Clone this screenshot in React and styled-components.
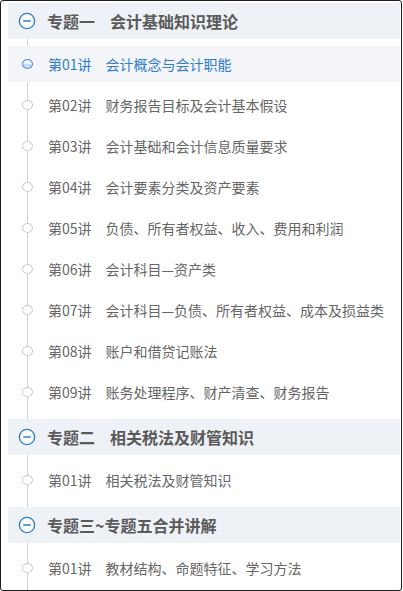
import React from 'react'
import styled, { createGlobalStyle } from 'styled-components'

const GlobalStyle = createGlobalStyle`
    html, body {
        margin: 0;
        padding: 0;
        background: #fff;
    }
    body {
        font-family: "Microsoft YaHei", "Noto Sans CJK SC", "Liberation Sans", sans-serif;
    }
`

const chapters = [
    {
        no: '专题一',
        title: '会计基础知识理论',
        lessons: [
            '会计概念与会计职能',
            '财务报告目标及会计基本假设',
            '会计基础和会计信息质量要求',
            '会计要素分类及资产要素',
            '负债、所有者权益、收入、费用和利润',
            '会计科目—资产类',
            '会计科目—负债、所有者权益、成本及损益类',
            '账户和借贷记账法',
            '账务处理程序、财产清查、财务报告',
        ],
    },
    {
        no: '专题二',
        title: '相关税法及财管知识',
        lessons: ['相关税法及财管知识'],
    },
    {
        no: '专题三~专题五合并讲解',
        title: '',
        lessons: ['教材结构、命题特征、学习方法'],
    },
]

function MinusIcon() {
    return (
        <svg width="18" height="18" viewBox="0 0 18 18">
            <circle cx="9" cy="9" r="7.6" fill="#fff" stroke="#2f7bcc" strokeWidth="1.4" />
            <line x1="5.2" y1="9" x2="12.8" y2="9" stroke="#2f7bcc" strokeWidth="1.4" />
        </svg>
    )
}

function App() {
    return (
        <>
            <GlobalStyle />
            <Frame>
                <Line />
                {chapters.map((ch, ci) => (
                    <Chapter key={ci}>
                        <Header>
                            <IconWrap>
                                <MinusIcon />
                            </IconWrap>
                            <HeaderNo>{ch.no}</HeaderNo>
                            {ch.title && <HeaderTitle>{ch.title}</HeaderTitle>}
                        </Header>
                        {ch.lessons.map((l, li) => {
                            const active = ci === 0 && li === 0
                            return (
                                <Lesson key={li} active={active}>
                                    <Dot active={active} />
                                    <LessonNo>第0{li + 1}讲</LessonNo>
                                    <span>{l}</span>
                                </Lesson>
                            )
                        })}
                    </Chapter>
                ))}
            </Frame>
        </>
    )
}

export default App

const Frame = styled.div`
    position: relative;
    box-sizing: border-box;
    width: 402px;
    height: 591px;
    border: 1px solid #1f1f1f;
    border-radius: 3px;
    padding: 2px 1px 0 7px;
    overflow: hidden;
`

const Line = styled.div`
    position: absolute;
    left: 26px;
    top: 28px;
    bottom: 0;
    width: 1px;
    background: #cfcfcf;
`

const Chapter = styled.div`
    position: relative;
    display: flex;
    flex-direction: column;
    gap: 5px;

    & + & {
        margin-top: 9px;
    }
`

const Header = styled.div`
    position: relative;
    display: flex;
    align-items: center;
    height: 36px;
    margin-bottom: 2px;
    background: #eef1f5;
    color: #5a5a5a;
    font-size: 16px;
    font-weight: bold;
`

const IconWrap = styled.div`
    display: flex;
    width: 18px;
    height: 18px;
    margin-left: 10px;
    margin-right: 11px;
`

const HeaderNo = styled.span`
    margin-right: 15px;
`

const HeaderTitle = styled.span``

const Lesson = styled.div`
    position: relative;
    display: flex;
    align-items: center;
    height: 36px;
    padding-left: 40px;
    font-size: 14px;
    color: ${p => (p.active ? '#2f7bcc' : '#666')};
    background: ${p => (p.active ? '#f3f5f8' : 'transparent')};
`

const Dot = styled.span`
    position: absolute;
    left: 14px;
    top: 13px;
    box-sizing: border-box;
    width: 11px;
    height: 10px;
    border-radius: 50%;
    border: 1px solid ${p => (p.active ? '#4a8ad4' : '#cfcfcf')};
    background: ${p => (p.active ? 'linear-gradient(#eef4fb 50%, #c9dcf3 50%)' : '#fff')};
`

const LessonNo = styled.span`
    margin-right: 14px;
`
